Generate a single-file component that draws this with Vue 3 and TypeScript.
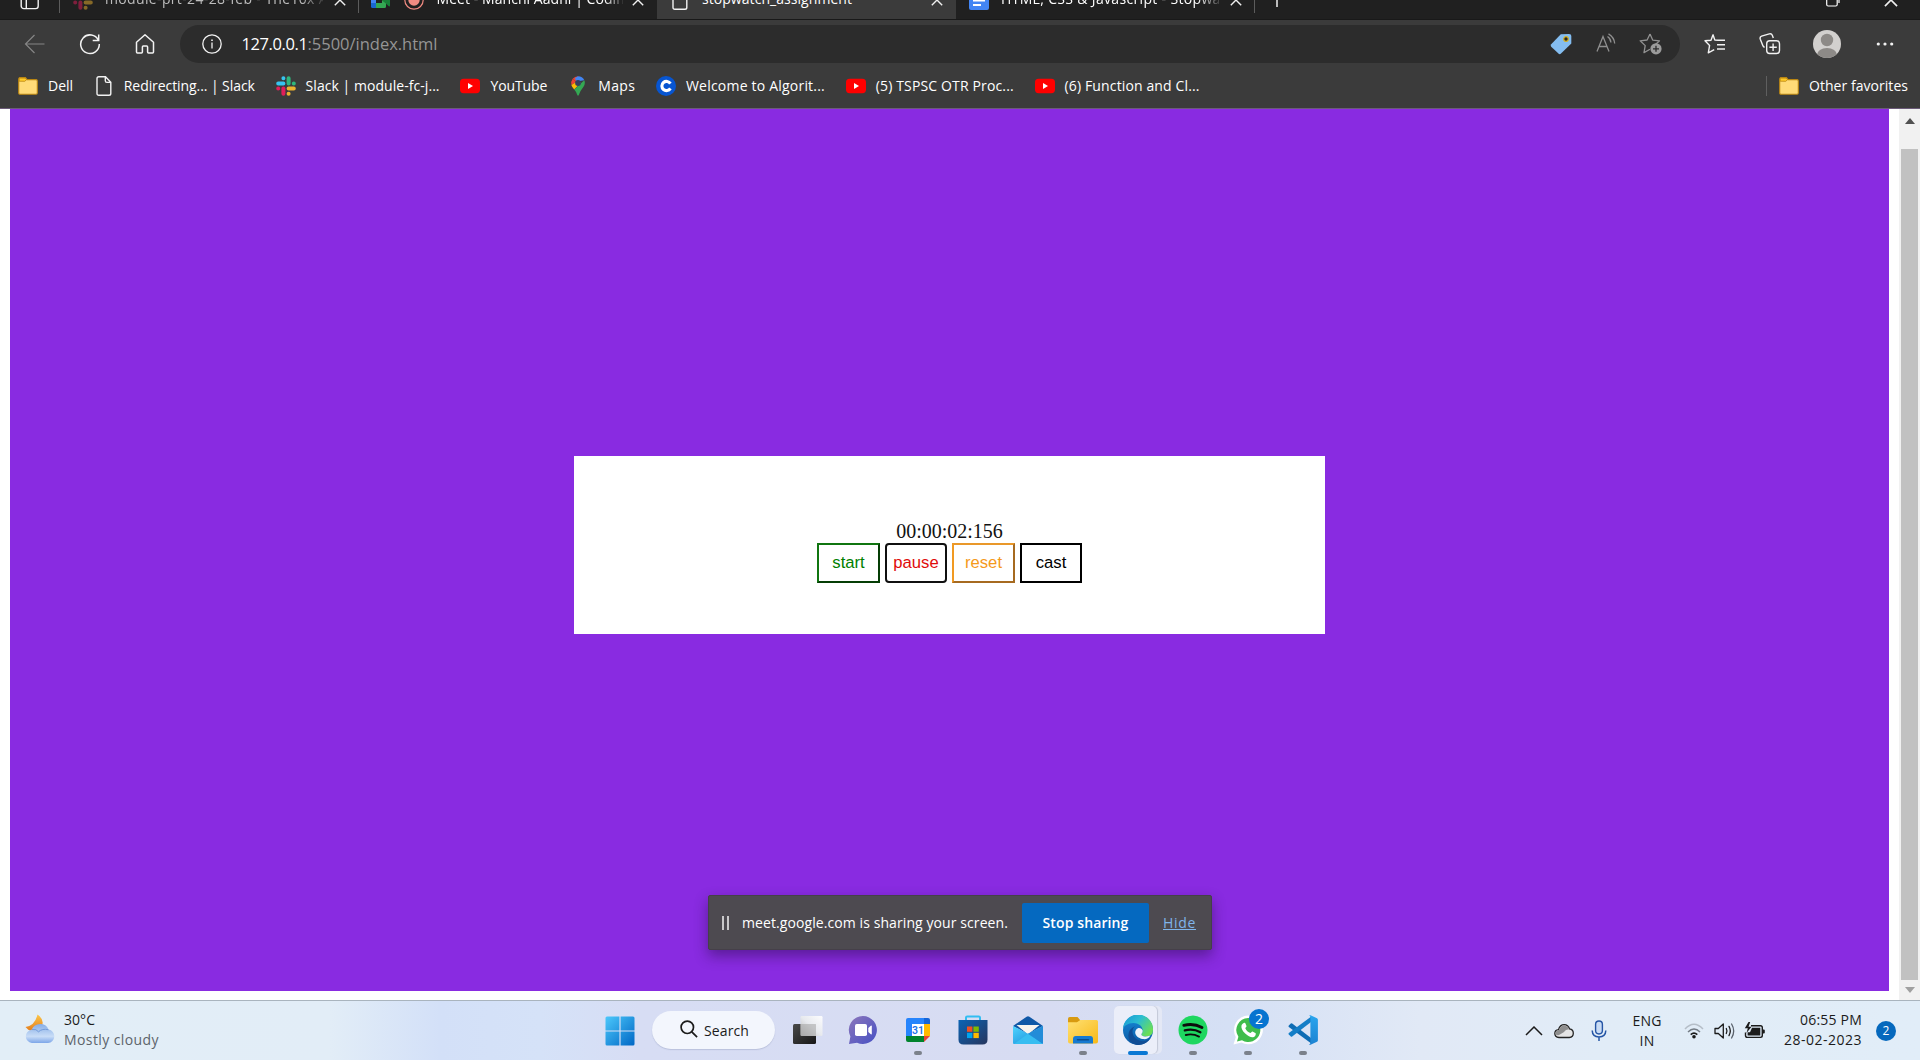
<script setup lang="ts">
import type { Directive } from 'vue'

interface Bookmark { icon: string; label: string; width: number }
interface TaskItem { icon: string; state?: 'open' | 'active' }

// Tracks a label so that it fills the given width in pixels.
const vFit: Directive<HTMLElement, number> = {
  mounted(el, { value }) {
    const range = document.createRange()
    range.selectNodeContents(el)
    const natural = range.getBoundingClientRect().width
    const count = (el.textContent ?? '').length
    if (count > 1) el.style.letterSpacing = `${(value - natural) / count}px`
  },
}

const bookmarks: Bookmark[] = [
  { icon: 'folder', label: 'Dell', width: 25 },
  { icon: 'page', label: 'Redirecting... | Slack', width: 131 },
  { icon: 'slack', label: 'Slack | module-fc-j...', width: 134 },
  { icon: 'youtube', label: 'YouTube', width: 57 },
  { icon: 'maps', label: 'Maps', width: 37 },
  { icon: 'coding', label: 'Welcome to Algorit...', width: 139 },
  { icon: 'youtube', label: '(5) TSPSC OTR Proc...', width: 138 },
  { icon: 'youtube', label: '(6) Function and Cl...', width: 135 },
]

const tasks: TaskItem[] = [
  { icon: 'taskview' },
  { icon: 'chat' },
  { icon: 'calendar', state: 'open' },
  { icon: 'store' },
  { icon: 'mail' },
  { icon: 'explorer', state: 'open' },
  { icon: 'edge', state: 'active' },
  { icon: 'spotify', state: 'open' },
  { icon: 'whatsapp', state: 'open' },
  { icon: 'vscode', state: 'open' },
]
</script>

<template>
  <div class="screen">
    <svg class="defs" width="0" height="0">
      <defs>
        <linearGradient id="gWin" x1="0" y1="0" x2="1" y2="1"><stop offset="0" stop-color="#4cc8fb" /><stop offset="1" stop-color="#0067c5" /></linearGradient>
        <linearGradient id="gDark" x1="0" y1="0" x2="1" y2="1"><stop offset="0" stop-color="#4a4a4a" /><stop offset="1" stop-color="#161616" /></linearGradient>
        <linearGradient id="gLight" x1="0" y1="1" x2="1" y2="0"><stop offset="0" stop-color="#b4b4b4" /><stop offset=".5" stop-color="#e9ebee" /><stop offset="1" stop-color="#fff" /></linearGradient>
        <linearGradient id="gChat" x1="0" y1="0" x2="1" y2="1"><stop offset="0" stop-color="#8d77bb" /><stop offset="1" stop-color="#4650c4" /></linearGradient>
        <linearGradient id="gStore" x1="0" y1="0" x2="1" y2="1"><stop offset="0" stop-color="#0b64b5" /><stop offset="1" stop-color="#26355d" /></linearGradient>
        <linearGradient id="gMail" x1="0" y1="0" x2="1" y2="1"><stop offset="0" stop-color="#4fd5ff" /><stop offset="1" stop-color="#1283d4" /></linearGradient>
        <linearGradient id="gFold" x1="0" y1="0" x2="1" y2="1"><stop offset="0" stop-color="#ffe073" /><stop offset="1" stop-color="#f8b917" /></linearGradient>
        <linearGradient id="gEdgeA" x1="0" y1="0" x2="1" y2=".6"><stop offset="0" stop-color="#1793d5" /><stop offset=".5" stop-color="#2bbdd2" /><stop offset="1" stop-color="#6ade57" /></linearGradient>
        <linearGradient id="gEdgeB" x1="0" y1="0" x2="0" y2="1"><stop offset="0" stop-color="#168ad9" /><stop offset="1" stop-color="#0c59a4" /></linearGradient>
        <linearGradient id="gCode" x1="0" y1="0" x2="0" y2="1"><stop offset="0" stop-color="#2aa5ee" /><stop offset="1" stop-color="#1c83d2" /></linearGradient>
        <linearGradient id="gMoon" x1="0" y1="0" x2="0" y2="1"><stop offset="0" stop-color="#fcc748" /><stop offset="1" stop-color="#e27b1e" /></linearGradient>
        <linearGradient id="gCloud" x1="0" y1="0" x2="0" y2="1"><stop offset="0" stop-color="#86aee6" /><stop offset=".65" stop-color="#c9ddf7" /><stop offset="1" stop-color="#7da6e8" /></linearGradient>
      </defs>

      <symbol id="folder" viewBox="0 0 20 20"><path d="M.7 3.2Q.7 1.6 2 1.6h5.4l1.6 2h9q1.3 0 1.3 1.3v12.2q0 1.2-1.2 1.2H1.9Q.7 18.3.7 17z" fill="#ffdb78" stroke="#b98512" stroke-width="1.1" /><path d="M1.2 5.2V3Q1.2 2.1 2 2.1h5.1l1.5 1.6-1.9 1.6z" fill="#ffc928" stroke="#b98512" stroke-width=".8" /></symbol>
      <symbol id="page" viewBox="0 0 20 20"><path d="M3 2.6Q3 .8 4.8.8h6.7l5.3 5.4v11.2q0 1.8-1.8 1.8H4.8Q3 19.2 3 17.4zM11.3.8v4q0 1.6 1.6 1.6h4" fill="none" stroke="#f2f2f2" stroke-width="1.4" /></symbol>
      <symbol id="slack" viewBox="0 0 20 20">
        <g stroke-width="4" stroke-linecap="round"><path d="M7.4 2.2h.01M2.2 7.4h5.2" stroke="#36c5f0" /><path d="M12.6 2.2v5.2M17.8 7.4h.01" stroke="#2eb67d" /><path d="M7.4 12.6v5.2M2.2 12.6h.01" stroke="#e01e5a" /><path d="M12.6 12.6h5.2M12.6 17.8h.01" stroke="#ecb22e" /></g>
      </symbol>
      <symbol id="youtube" viewBox="0 0 20 20"><rect y="2.8" width="20" height="14.4" rx="3.6" fill="#f00" /><path d="M8 7.1v5.8l5-2.9z" fill="#fff" /></symbol>
      <symbol id="maps" viewBox="0 0 20 20"><path d="M10 .2A6.9 6.9 0 0 0 4.7 2.7L8.2 6z" fill="#ea4335" /><path d="M10 .2q4.5 0 6.3 4L8.2 5.6 7 2z" fill="#4285f4" /><path d="M4.7 2.7Q2.5 5.5 3.4 9l4.8-3z" fill="#ea4335" /><path d="M3.4 9q.5 2 2.8 4.5L13 6.6 8.2 6z" fill="#fbbc04" /><path d="M16.3 4.2q1.4 3.5-.8 6.6-3.7 4.6-4.7 8.2-.8 1.6-1.5 0-.8-3-3.1-5.5z" fill="#34a853" /><circle cx="10" cy="7" r="2.9" fill="#334061" /></symbol>
      <symbol id="coding" viewBox="0 0 20 20"><circle cx="10" cy="10" r="10" fill="#0755d1" /><path d="M14.4 7.6a4.6 4.6 0 1 0 0 4.8" fill="none" stroke="#fff" stroke-width="3.1" /></symbol>
      <symbol id="x" viewBox="0 0 12 12"><path d="M.8.8l10.4 10.4M11.2.8.8 11.2" fill="none" stroke="#f0f0f0" stroke-width="1.4" /></symbol>

      <symbol id="taskview" viewBox="0 0 30 30"><rect y="9" width="23" height="20" rx="1.5" fill="url(#gDark)" /><rect x="7.5" y="1" width="22" height="20" rx="1.2" fill="url(#gLight)" opacity=".93" /><path d="M7.5 9H23v12H8.700q-1.200 0-1.200-1.200z" fill="#a8a8a8" opacity=".5" /></symbol>
      <symbol id="chat" viewBox="0 0 30 30"><path d="M15 1a14 14 0 1 1-6 26.7L1 29l1.4-7.5A14 14 0 0 1 15 1z" fill="url(#gChat)" /><rect x="7" y="9" width="12" height="12" rx="1.8" fill="#fff" /><path d="m20.3 13 2.5-2.3q1-.5 1 .6v7.4q0 1.1-1 .6L20.3 17z" fill="#fff" /></symbol>
      <symbol id="calendar" viewBox="0 0 30 30"><path d="M3 5q0-2 2-2h16v6H9v12H3z" fill="#2684fc" /><path d="M21 3h4q2 0 2 2v4h-6z" fill="#1565d8" /><path d="M21 9h6v12h-6z" fill="#ffba00" /><path d="M3 21h18v6H5q-2 0-2-2z" fill="#00832d" /><path d="M21 21h6l-6 6z" fill="#ea4335" /><path d="M9 9h12v12H9z" fill="#fff" /><text x="15" y="18.8" text-anchor="middle" font-family="Roboto, sans-serif" font-size="10.5" font-weight="600" fill="#1a73e8">31</text></symbol>
      <symbol id="store" viewBox="0 0 30 30"><path d="M8 6V2.800Q8 1.500 9.200 1.500h11.600Q22 1.500 22 2.800V6" fill="none" stroke="#32bdf2" stroke-width="2" /><path d="M.5 5h29v19.500q0 5-5 5h-19q-5 0-5-5z" fill="url(#gStore)" /><path d="M9 11.5h5.4v5.3H9z" fill="#f25022" /><path d="M15.4 11.5h5.4v5.3h-5.4z" fill="#7fba00" /><path d="M9 17.8h5.4v5.3H9z" fill="#00a4ef" /><path d="M15.4 17.8h5.4v5.3h-5.4z" fill="#ffb900" /></symbol>
      <symbol id="mail" viewBox="0 0 30 30"><path d="M0 11 13.6 1.7q1.4-1 2.8 0L30 11 15 19z" fill="#0f58a7" /><path d="M3.5 10h23L15 19.5z" fill="#f8f4ee" /><path d="M0 11v17q0 1 1 1h28q1 0 1-1V11L15 18.8z" fill="url(#gMail)" /><path d="M15 18.8 30 29H1z" fill="#37bdf1" /><path d="m15 18.8 15 9.6V11z" fill="#238cd8" /></symbol>
      <symbol id="explorer" viewBox="0 0 30 30"><path d="M0 3.8Q0 2 1.8 2h7.700l3 3.500L10 9H0z" fill="#d89a10" /><path d="M0 7.2h9L12.300 5H28.500Q30 5 30 6.500v20q0 2-2 2H2q-2 0-2-2z" fill="url(#gFold)" /><path d="M5 28.500v-4.600Q5 21 7.800 21h14.400q2.800 0 2.800 2.900v4.600z" fill="#167ad1" /><path d="M9.500 24.800h11" stroke="#0c4d8d" stroke-width="1.500" stroke-linecap="round" /></symbol>
      <symbol id="edge" viewBox="0 0 30 30"><circle cx="15" cy="15" r="15" fill="url(#gEdgeB)" /><path d="M0 14.2A15 15 0 0 1 30 14.8q0 6.4-6.4 6.6-5 .1-5.2-2.2c0-1 1.4-1.5 1.3-3.8C19.5 11 15 8 10.4 8.1 4.5 8.2 1 11 0 14.2z" fill="url(#gEdgeA)" /><path d="M12.3 11.2c-4.8 3-3.3 11.1 3.2 14 5 2.1 9 .4 11.8-2.2l.2.3A15 15 0 0 1 13 29.8Q5.600 28 5.300 20.500 5.400 13.700 12.300 11.200z" fill="#104d95" /><path d="M12.200 17.800c-.1-4.200 4.600-7.300 7.500-2.400.2 2.300-1.300 2.800-1.300 3.900.1 2.300 3.800 2.800 8.900 1.200-1.300 3.200-4.500 4.200-7.800 3.600-4-.8-7.200-3.500-7.300-6.300z" fill="#eff3fb" /></symbol>
      <symbol id="spotify" viewBox="0 0 30 30"><circle cx="15" cy="15" r="14.5" fill="#1ed760" /><g fill="none" stroke="#0c0c0c" stroke-linecap="round"><path d="M5.8 10.4Q15.5 7.8 24 12.5" stroke-width="2.8" /><path d="M6.8 15.4q8.4-2.2 15.6 1.8" stroke-width="2.3" /><path d="M7.8 20q7-1.8 13.2 1.6" stroke-width="1.9" /></g></symbol>
      <symbol id="whatsapp" viewBox="0 0 30 30"><path d="M15.2.5a14.4 14.4 0 1 1-6.7 27L.5 29.6l2.3-7.7A14.4 14.4 0 0 1 15.2.5z" fill="#fff" /><path d="M15.2 3a12 12 0 1 1-6.2 22.2l-5 1.3 1.4-4.8A12 12 0 0 1 15.2 3z" fill="#3fbd4c" /><path d="M10.8 7.9c.7-.3 1.3-.2 1.7.7l1 2.5c.3.7-1.2 1.7-1.2 2.2.7 2 3 4.1 5 4.8.7 0 1.5-1.8 2.2-1.6l2.8 1.500c1.200.6.1 3.400-1.500 4-2 .8-5.500-.3-8.600-3.400-3-2.900-4.300-6-3.700-8.100.3-1 1-2 2.300-2.600z" fill="#fff" /></symbol>
      <symbol id="vscode" viewBox="0 0 30 30"><path d="M.8 10.4 2.8 8.6q.7-.5 1.4 0L24 23.7V29L.8 12q-.7-.8 0-1.6z" fill="#0e6cb4" /><path d="M.8 19.6l2 1.8q.7.5 1.4 0L24 6.3V1L.8 18q-.7.8 0 1.6z" fill="#147ec7" /><path d="M22.5.2 29 3.2q.9.5.9 1.5v20.6q0 1-.9 1.5l-6.5 3q-1 .2-1.7-.6 1.300.4 1.600-1.200V2Q22.100.4 20.800.8q.7-.8 1.700-.6z" fill="url(#gCode)" /></symbol>
    </svg>

    <header class="chrome">
      <div class="tabs">
        <div class="tab-actions">
          <svg width="20" height="20" viewBox="0 0 20 20"><rect x="1.2" y="1" width="17" height="17.6" rx="2.6" fill="none" stroke="#f0f0f0" stroke-width="1.4" /><path d="M6.3 1v17.6M1.2 6h17" stroke="#f0f0f0" stroke-width="1.4" /></svg>
        </div>
        <div class="tab tab-slack dim">
          <svg class="fav" width="20" height="20"><use href="#slack" /></svg>
          <span class="tab-title"><span v-fit="223">module-prt-24-28-feb - The10x A</span></span>
          <svg width="12" height="12"><use href="#x" /></svg>
        </div>
        <div class="tab tab-meet">
          <svg width="20" height="20" viewBox="0 0 20 20"><path d="M0 7 5 2v5z" fill="#ea4335" /><path d="M0 7h5v6H0z" fill="#4285f4" /><path d="M0 13h5v5H1.5Q0 18 0 16.5z" fill="#1967d2" /><path d="M5 2h8.5Q15 2 15 3.5v4L11 10.500V7H5z" fill="#fbbc04" /><path d="M5 13h6v-3l4 3v3.500q0 1.500-1.500 1.500H5z" fill="#34a853" /><path d="m11 10 6.500-6Q19 3 19 4.500v11q0 1.500-1.500.500z" fill="#188038" /></svg>
          <svg class="record" width="20" height="20" viewBox="0 0 20 20"><circle cx="10" cy="10" r="9.200" fill="none" stroke="#f28b82" stroke-width="1.200" /><circle cx="10" cy="10" r="5.700" fill="#f28b82" /></svg>
          <span class="tab-title"><span v-fit="196">Meet - Manchi Aadhi | Coding</span></span>
          <svg width="12" height="12"><use href="#x" /></svg>
        </div>
        <div class="tab tab-active">
          <svg width="20" height="20"><use href="#page" /></svg>
          <span class="tab-title plain"><span v-fit="150">stopwatch_assignment</span></span>
          <svg width="12" height="12"><use href="#x" /></svg>
        </div>
        <div class="tab tab-docs">
          <svg width="20" height="20" viewBox="0 0 20 20"><rect width="20" height="20" rx="2" fill="#4285f4" /><path d="M4 6h12M4 10.500h12M4 15h8" stroke="#fff" stroke-width="1.900" /></svg>
          <span class="tab-title"><span v-fit="225">HTML, CSS &amp; Javascript - Stopwat</span></span>
          <svg width="12" height="12"><use href="#x" /></svg>
        </div>
        <div class="new-tab"><svg width="18" height="18" viewBox="0 0 18 18"><path d="M9 0v18M0 9h18" stroke="#f0f0f0" stroke-width="1.500" /></svg></div>
        <div class="window-controls">
          <svg width="14" height="14" viewBox="0 0 14 14"><rect x=".7" y="2.500" width="10.500" height="10.500" rx="1.500" fill="none" stroke="#fff" stroke-width="1.200" /><path d="M3 .7h8q2 0 2 2V10" fill="none" stroke="#fff" stroke-width="1.200" /></svg>
          <svg width="14" height="14"><use href="#x" /></svg>
        </div>
      </div>

      <div class="toolbar">
        <button class="tool"><svg width="22" height="22" viewBox="0 0 22 22" fill="none" stroke="#858585" stroke-width="1.200"><path d="M20.500 11H1.500M10.500 2l-9 9 9 9" /></svg></button>
        <button class="tool"><svg width="22" height="22" viewBox="0 0 22 22" fill="none" stroke="#f2f2f2" stroke-width="1.500"><path d="M19.400 7.200A9.300 9.300 0 1 0 20.300 11M19.700 1.500v5.900h-6" /></svg></button>
        <button class="tool"><svg width="22" height="22" viewBox="0 0 22 22" fill="none" stroke="#f2f2f2" stroke-width="1.500" stroke-linejoin="round"><path d="M2.500 9.200 11 1.800l8.500 7.400v9.900q0 .9-.9.900h-4.100q-.9 0-.9-.9v-5.200q0-.9-.9-.9h-3.400q-.9 0-.9.900v5.200q0 .9-.9.900H3.400q-.9 0-.9-.9z" /></svg></button>
        <div class="address">
          <svg class="info" width="20" height="20" viewBox="0 0 20 20" fill="none" stroke="#f2f2f2" stroke-width="1.300"><circle cx="10" cy="10" r="9.200" /><path d="M10 8.600v6" /><path d="M10 5.400v1.500" stroke-width="1.600" /></svg>
          <span class="url"><b v-fit="66">127.0.0.1</b><span v-fit="130">:5500/index.html</span></span>
          <span class="slot"><svg width="22" height="22" viewBox="0 0 22 22"><path d="M10.800 1.200 19 .9q2.300 0 2.300 2v7.500L11 20.600q-1.300 1.200-2.600 0L1.200 13.700q-1-1.300 0-2.400z" fill="#84bdf0" /><circle cx="16" cy="6" r="2.300" fill="#292929" stroke="#d4b022" stroke-width="1.200" /></svg></span>
          <span class="slot"><svg width="22" height="22" viewBox="0 0 22 22" fill="none" stroke="#8f8f8f" stroke-width="1.300"><path d="m2 18.500 6-15 6 15M4 13.500h8M12.500 3.500q3.300 2.200 3.400 6M13.500.9q5.600 3.300 6.200 9.600" /></svg></span>
          <span class="slot"><svg width="24" height="24" viewBox="0 0 24 24" fill="none"><path d="m11 2 2.700 6.100 6.800.7-5 4.700M11 17.300l-6 3.300 1.200-7-5-4.800 6.900-.8L11 2" stroke="#919191" stroke-width="1.300" stroke-linejoin="round" /><circle cx="17" cy="16.800" r="5.600" fill="#9b9b9b" /><path d="M17 13.800v6M14 16.800h6" stroke="#2c2c2c" stroke-width="1.300" /></svg></span>
        </div>
        <button class="tool first"><svg width="22" height="22" viewBox="0 0 22 22" fill="none" stroke="#f2f2f2" stroke-width="1.400" stroke-linejoin="round"><path d="M14 7.300 10.800 7 9 1.800 7 7.300 1 7.800l4.600 4.600-1.300 7.500 5.900-3.200M13 7.300h8M13 11.700h8M13 16h8" /></svg></button>
        <button class="tool"><svg width="22" height="22" viewBox="0 0 22 22" fill="none" stroke="#f2f2f2" stroke-width="1.400"><rect x="7.700" y="7.700" width="12.800" height="12.800" rx="3" /><path d="M14.100 10.500v7.400M10.400 14.200h7.400M5.600 14.300q-1.300-.3-1.900-2L1.300 6.200q-.8-2.200 1.300-3L10.300.9q2.200-.6 3 1.300l1 2.700" /></svg></button>
        <button class="tool wide"><svg width="28" height="28" viewBox="0 0 28 28"><defs><clipPath id="face"><circle cx="14" cy="14" r="14" /></clipPath></defs><g clip-path="url(#face)"><rect width="28" height="28" fill="#d2d0ce" /><circle cx="14" cy="10" r="6.200" fill="#8d8a87" /><ellipse cx="14" cy="25" rx="10" ry="7" fill="#8d8a87" /></g></svg></button>
        <button class="tool wide"><svg width="18" height="6" viewBox="0 0 18 6" fill="#f2f2f2"><circle cx="2.300" cy="3" r="1.600" /><circle cx="9" cy="3" r="1.600" /><circle cx="15.700" cy="3" r="1.600" /></svg></button>
      </div>

      <nav class="bookmarks">
        <a v-for="b in bookmarks" :key="b.label" class="bookmark">
          <svg width="20" height="20"><use :href="'#' + b.icon" /></svg>
          <span class="bookmark-label" :style="{ width: b.width + 'px' }"><span v-fit="b.width">{{ b.label }}</span></span>
        </a>
        <a class="bookmark other"><svg width="20" height="20"><use href="#folder" /></svg><span v-fit="99">Other favorites</span></a>
      </nav>
    </header>

    <main class="viewport">
      <div class="page">
        <section class="card">
          <div class="time">00:00:02:156</div>
          <div class="controls">
            <button class="start">start</button>
            <button class="pause">pause</button>
            <button class="reset">reset</button>
            <button class="cast">cast</button>
          </div>
        </section>
      </div>
      <div class="scrollbar">
        <svg class="up" width="10" height="6" viewBox="0 0 10 6"><path d="M0 6 5 0l5 6z" fill="#505050" /></svg>
        <div class="thumb"></div>
        <svg width="10" height="6" viewBox="0 0 10 6"><path d="M0 0h10L5 6z" fill="#a0a0a0" /></svg>
      </div>
      <div class="share">
        <i class="grip"></i>
        <span class="share-text"><span v-fit="266">meet.google.com is sharing your screen.</span></span>
        <button class="stop"><span v-fit="86">Stop sharing</span></button>
        <a class="hide"><span v-fit="33">Hide</span></a>
      </div>
    </main>

    <footer class="taskbar">
      <div class="weather">
        <svg width="32" height="32" viewBox="0 0 32 32"><path d="M13.500 1.500q7.300 5 4.300 12-4.800 7.500-13.500 3.200L1.500 14q9.500-1.300 12-12.500z" fill="url(#gMoon)" /><path d="M7.800 30a6.700 6.700 0 0 1-.2-13.300 9.300 9.300 0 0 1 17-.2A6.800 6.800 0 0 1 24 30z" fill="url(#gCloud)" /><path d="M8 16.500q4.500-.8 6.500 2.300 3.600-3.500 9.900-2.100" fill="none" stroke="#739bda" /></svg>
        <div class="weather-text"><span v-fit="31">30°C</span><span v-fit="95" class="muted">Mostly cloudy</span></div>
      </div>

      <div class="center">
        <svg class="windows" width="30" height="30" viewBox="0 0 30 30"><path d="M2 .5h12.400v13.900H.5V2Q.5.500 2 .5zM15.600.5H28q1.500 0 1.500 1.500v12.400H15.600zM.5 15.600h13.900v13.900H2Q.5 29.500.5 28zM15.600 15.600h13.900V28q0 1.500-1.500 1.500H15.600z" fill="url(#gWin)" /></svg>
        <div class="search"><svg width="18" height="18" viewBox="0 0 18 18" fill="none" stroke="#1b1b1b" stroke-width="1.700"><circle cx="7.300" cy="7.300" r="6.200" /><path d="m11.800 11.800 5.300 5.300" /></svg><span v-fit="45">Search</span></div>
        <div v-for="t in tasks" :key="t.icon" class="task" :class="t.state">
          <svg width="30" height="30"><use :href="'#' + t.icon" /></svg>
          <span v-if="t.icon === 'whatsapp'" class="badge">2</span>
        </div>
      </div>

      <div class="tray">
        <svg class="chevron" width="18" height="10" viewBox="0 0 18 10"><path d="m1 9 8-8 8 8" fill="none" stroke="#1b1b1b" stroke-width="1.500" /></svg>
        <svg class="cloud" width="20" height="16" viewBox="0 0 20 16"><path d="M5 14.500Q.8 14 .8 10.500T4.500 6.600Q6 1.600 10.200 1.600q4 0 5.400 4.300 3.700.6 3.700 4.300 0 3.800-4 4.300z" fill="#e5e5e5" stroke="#242424" stroke-width="1.300" /><path d="M1.400 10Q2 7.200 5 7q2-5 6-4.600 3 .6 4.100 3.900-3.600.2-5.400 3L5 12Q2 13 1.400 10z" fill="#8e8e8e" /></svg>
        <svg class="mic" width="16" height="22" viewBox="0 0 16 22"><rect x="4.600" y="1" width="6.800" height="13" rx="3.400" fill="#c9dcf5" stroke="#2555a5" stroke-width="1.400" /><path d="M1.200 10.500q.2 6.400 6.800 6.400t6.800-6.400M8 17v4" fill="none" stroke="#2555a5" stroke-width="1.500" /></svg>
        <div class="lang"><span v-fit="29">ENG</span><span v-fit="15">IN</span></div>
        <svg class="wifi" width="20" height="18" viewBox="0 0 20 18" fill="none"><path d="M1 7Q10-2.500 19 7" stroke="#b5bec8" stroke-width="1.500" /><path d="M4 10q6-6 12 0" stroke="#747c85" stroke-width="1.500" /><path d="M6.700 12.700q3.300-3 6.600 0" stroke="#1b1b1b" stroke-width="1.600" /><circle cx="10" cy="14.800" r="1.800" fill="#1b1b1b" /></svg>
        <svg class="volume" width="21" height="18" viewBox="0 0 21 18" fill="none" stroke="#1b1b1b" stroke-width="1.300" stroke-linejoin="round" stroke-linecap="round"><path d="M1 6.500h3.300L9.300 2v14l-5-4.500H1zM12.300 6.500q1.300 2.500 0 5M15 4.400q2.600 4.600 0 9.200" /><path d="M17.600 2q4.200 7 0 14" stroke="#59616b" /></svg>
        <svg class="battery" width="21" height="18" viewBox="0 0 21 18"><path d="M7 3.800h9.500q1.800 0 1.800 1.800v8q0 1.800-1.800 1.800H3.300q-1.800 0-1.800-1.800v-3" fill="none" stroke="#1b1b1b" stroke-width="1.400" /><path d="M8 5.800h8.300v7.600H3.600v-3.200H6zM18.600 7.500h1.200q1 0 1 1v2q0 1-1 1h-1.200z" fill="#1b1b1b" /><path d="M4.500 0 .8 6.300h3L2.500 11l5-6.300h-3L6.200 0z" fill="#1b1b1b" /></svg>
        <div class="clock"><span v-fit="62">06:55 PM</span><span v-fit="78">28-02-2023</span></div>
        <span class="count">2</span>
      </div>
    </footer>
  </div>
</template>

<style>
body { margin: 0; overflow: hidden; }
</style>

<style scoped>
* { box-sizing: border-box; }
svg { display: block; flex: none; }
button { padding: 0; border: 0; background: none; }
.defs { position: absolute; }
.screen { width: 1920px; height: 1060px; display: flex; flex-direction: column; overflow: hidden; font: 14px "Open Sans", sans-serif; background: #fff; }
.chrome { height: 109px; flex: none; background: #3b3b3b; border-bottom: 1px solid #6b5b78; color: #fff; }

.tabs { height: 20px; display: flex; align-items: flex-end; background: #202020; overflow: hidden; border-bottom: 1px solid #191919; }
.tabs > div { height: 39px; margin-bottom: -1px; padding-bottom: 1px; display: flex; align-items: center; flex: none; }
.tab-actions { width: 60px; padding-left: 20px; }
.tab-actions::after { content: ""; width: 1px; height: 26px; background: #5c5c5c; margin-left: 19px; }
.tab { padding-left: 13px; background: #202020; }
.tab > svg:last-child { margin-left: auto; }
.tab-slack { width: 299px; padding-right: 13px; background: linear-gradient(#5c5c5c, #5c5c5c) right 6px / 1px 26px no-repeat #202020; }
.dim .fav { opacity: .5; }
.dim .tab-title { color: #bdbdbd; }
.tab-meet { width: 298px; padding-left: 12px; padding-right: 13px; border-bottom-right-radius: 6px; }
.record { margin-left: 12.500px; }
.tab-active { width: 299px; padding: 0 13px; background: #3b3b3b; }
.tab-docs { width: 299px; padding-right: 13px; border-bottom-left-radius: 6px; background: linear-gradient(#5c5c5c, #5c5c5c) right 6px / 1px 26px no-repeat #202020; }
.tab-title { flex: none; width: 218px; margin-left: 12px; padding-bottom: 2px; overflow: hidden; white-space: nowrap; line-height: 22px; -webkit-mask-image: linear-gradient(90deg, #000 90%, transparent 102%); mask-image: linear-gradient(90deg, #000 90%, transparent 102%); }
.tab-meet .tab-title { width: 186px; margin-left: 13px; }
.tab-title.plain { -webkit-mask-image: none; mask-image: none; }
.tabs > .new-tab { padding-left: 13px; padding-bottom: 5px; }
.window-controls { margin-left: auto; gap: 44px; padding-right: 22px; }

.toolbar { height: 48px; display: flex; align-items: center; padding-left: 7px; }
.tool { width: 55px; height: 38px; display: flex; align-items: center; justify-content: center; flex: none; }
.tool.wide { width: 58px; }
.tool.first { margin-left: 7px; }
.tool.first + .tool + .tool { margin-left: 1px; }
.address { width: 1500px; height: 38px; margin-left: 8px; border-radius: 19px; background: #2c2c2c; display: flex; align-items: center; padding: 0 7px 0 22px; }
.url { flex: 1; margin-left: 19.500px; display: flex; font-size: 16.500px; line-height: 24px; color: #959595; white-space: nowrap; }
.url b { font-weight: 400; color: #fff; width: 66px; }
.slot { width: 45px; display: flex; justify-content: center; }

.bookmarks { height: 36px; display: flex; align-items: center; gap: 20.800px; padding: 0 12px 0 18px; }
.bookmark { display: flex; align-items: center; gap: 10px; line-height: 20px; white-space: nowrap; }
.bookmark-label { flex: none; display: block; }
.other { margin-left: auto; padding-left: 12px; border-left: 1px solid #5f5f5f; }

.viewport { height: 891px; flex: none; display: flex; position: relative; background: #fff; }
.page { width: 1879px; height: 882px; margin-left: 10px; background: #892be1; display: flex; align-items: flex-start; justify-content: center; padding-top: 347px; }
.card { width: 751px; height: 178px; background: #fff; display: flex; flex-direction: column; align-items: center; padding-top: 64px; }
.time { font: 20px/23px "Liberation Serif", serif; color: #111; }
.controls { display: flex; gap: 5px; }
.controls button { width: 62px; height: 40px; border: 2px solid #000; background: #fff; font: 16.670px "Liberation Sans", sans-serif; }
.controls .start { width: 63px; color: green; border-color: #107510 #053d05 #053d05 #107510; }
.controls .pause { color: #e00b0b; border-color: #101010; border-radius: 4px; }
.controls .reset { width: 63px; color: #f59a1b; border-color: #e9982a #a66a20 #a66a20 #f19a22; }
.controls .cast { color: #000; }
.scrollbar { width: 21px; margin-left: 10px; background: #f1f1f1; display: flex; flex-direction: column; align-items: center; }
.up { margin-top: 9px; }
.thumb { width: 17px; height: 831px; margin: 25px 0 7px; background: #c1c1c1; }
.share { position: absolute; left: 708px; top: 786px; width: 504px; height: 55px; display: flex; align-items: center; background: #4d4a50; border: 1px solid #454049; border-radius: 2px; box-shadow: 0 6px 14px rgba(30, 10, 60, .45); color: #fff; white-space: nowrap; }
.grip { width: 7px; height: 14px; margin-left: 13px; border: solid #c9c8ca; border-width: 0 2px; }
.share-text { width: 267px; margin-left: 13px; }
.stop { width: 127px; height: 40px; margin-left: 13px; border-radius: 2px; background: #0569c0; color: #fff; font: 600 14px "Open Sans", sans-serif; }
.hide { margin-left: 14px; color: #80b5ea; text-decoration: underline; }

.taskbar { height: 60px; border-top: 1px solid #a9b4be; display: flex; position: relative; background: linear-gradient(90deg, #e2eef7 0, #e2edf7 330px, #d3e0f8 440px, #d5e2f8 540px, #d7ddf4 640px, #d7dcf2 1050px, #d5e0f5 1230px, #e1e9f6 1420px, #e1ecf7 1600px, #e1edf8); color: #1b1b1b; white-space: nowrap; }
.weather { width: 605px; display: flex; padding-left: 24px; flex: none; }
.weather > svg { margin-top: 12px; }
.weather-text { display: flex; flex-direction: column; margin: 9px 0 0 8px; line-height: 20px; align-items: flex-start; }
.muted { color: #5d646b; }
.center { width: 750px; display: flex; align-items: flex-start; flex: none; }
.windows { margin-top: 15px; margin-left: -.5px; }
.search { width: 123px; height: 38px; margin: 10px 5px 0 17.500px; border-radius: 19px; background: #f3f6fd; box-shadow: 0 1px 1px rgba(100, 110, 150, .25); display: flex; align-items: center; padding-left: 28px; gap: 6px; }
.search svg { margin-bottom: 2px; }
.task { width: 55px; height: 55px; display: flex; justify-content: center; padding-top: 14px; position: relative; flex: none; }
.open::after, .active::after { content: ""; position: absolute; bottom: 1px; left: 24px; width: 8px; height: 4px; border-radius: 2px; background: #7b818b; }
.active::before { content: ""; position: absolute; left: 4px; top: 5px; width: 43px; height: 48px; border-radius: 5px; background: #ebeef9; box-shadow: 1px 0 1px #c3c8d8, 5px 0 0 #e4e8f5; }
.active svg { position: relative; }
.active::after { left: 18px; width: 20px; background: #0a78d4; }
.badge { position: absolute; left: 29px; top: 8px; width: 20px; height: 20px; border-radius: 50%; background: #0674d0; color: #fff; text-align: center; line-height: 20px; }
.tray { flex: 1; display: flex; align-items: center; padding-left: 170px; }
.cloud { margin-left: 11px; }
.mic { margin-left: 17px; }
.lang { width: 30px; margin-left: 25px; display: flex; flex-direction: column; align-items: center; line-height: 20px; }
.wifi { margin-left: 22px; }
.volume { margin-left: 10px; }
.battery { margin-left: 8.500px; }
.clock { width: 80px; margin-left: 17.500px; display: flex; flex-direction: column; align-items: flex-end; line-height: 20px; margin-top: -2px; }
.count { width: 20px; height: 20px; margin-left: 14px; border-radius: 50%; background: #0568bd; color: #fff; font-size: 12px; line-height: 20px; text-align: center; }
</style>
